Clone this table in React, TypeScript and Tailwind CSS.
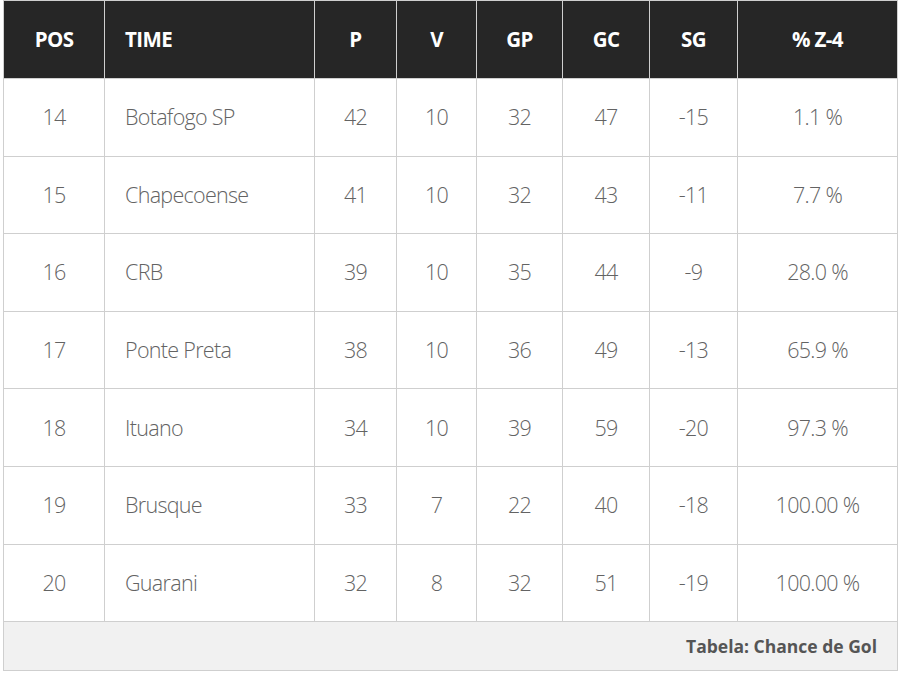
import React from "react";

const rows = [
  ["14", "Botafogo SP", "42", "10", "32", "47", "-15", "1.1 %"],
  ["15", "Chapecoense", "41", "10", "32", "43", "-11", "7.7 %"],
  ["16", "CRB", "39", "10", "35", "44", "-9", "28.0 %"],
  ["17", "Ponte Preta", "38", "10", "36", "49", "-13", "65.9 %"],
  ["18", "Ituano", "34", "10", "39", "59", "-20", "97.3 %"],
  ["19", "Brusque", "33", "7", "22", "40", "-18", "100.00 %"],
  ["20", "Guarani", "32", "8", "32", "51", "-19", "100.00 %"],
];

const widths = ["w-[101px]", "w-[210px]", "w-[82px]", "w-[80px]", "w-[86px]", "w-[87px]", "w-[88px]", "w-[160px]"];
const heads = ["POS", "TIME", "P", "V", "GP", "GC", "SG", "% Z-4"];

export default function App() {
  return (
    <div className="w-[900px] h-[675px] bg-white pl-[3px] pt-0" style={{ fontFamily: '"Open Sans", sans-serif' }}>
      <table className="border-collapse table-fixed w-[895px]">
        <thead>
          <tr className="h-[78px] bg-[#262626]">
            {heads.map((h, i) => (
              <th
                key={h}
                className={`${widths[i]} border border-[#cfcfcf] text-white font-bold text-[20.5px] tracking-[-0.6px] ${i === 1 ? "text-left pl-[20px]" : "text-center"}`}
              >
                {h}
              </th>
            ))}
          </tr>
        </thead>
        <tbody>
          {rows.map((r) => (
            <tr key={r[0]} className="h-[77.6px] bg-white">
              {r.map((c, i) => (
                <td
                  key={i}
                  className={`border border-[#cfcfcf] text-[#636363] font-light text-[21.5px] tracking-[-0.7px] ${i === 1 ? "text-left pl-[20px]" : "text-center"}`}
                >
                  {c}
                </td>
              ))}
            </tr>
          ))}
          <tr className="h-[49px] bg-[#f1f1f1]">
            <td colSpan={8} className="border border-[#cfcfcf] text-right pr-[20px] text-[#555] font-bold text-[17.5px]">
              Tabela: Chance de Gol
            </td>
          </tr>
        </tbody>
      </table>
    </div>
  );
}
